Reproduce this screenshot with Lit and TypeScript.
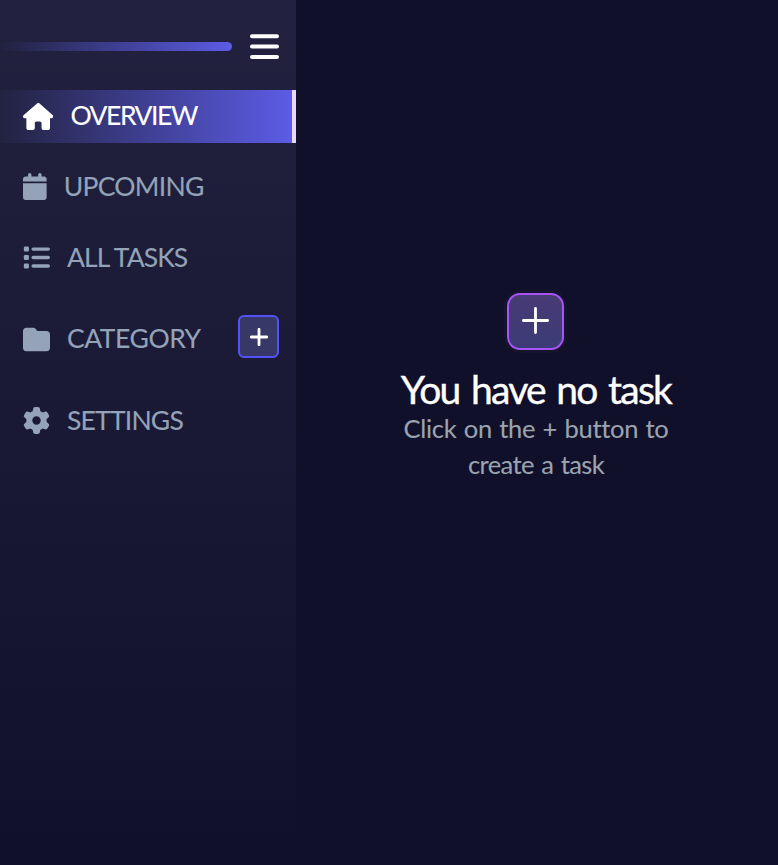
import { LitElement, html, css, svg } from "lit";
import { customElement } from "lit/decorators.js";

const house = svg`<path d="M575.8 255.5c0 18-15 32.1-32 32.1h-32l.7 160.2c0 2.7-.2 5.4-.5 8.1V472c0 22.1-17.9 40-40 40H456c-1.1 0-2.2 0-3.3-.1c-1.4 .1-2.8 .1-4.2 .1H416 392c-22.1 0-40-17.9-40-40V448 384c0-17.7-14.3-32-32-32H256c-17.7 0-32 14.3-32 32v64 24c0 22.1-17.9 40-40 40H160 128.1c-1.5 0-3-.1-4.5-.2c-1.2 .1-2.4 .2-3.6 .2H104c-22.1 0-40-17.9-40-40V360c0-.9 0-1.9 .1-2.8V287.6H32c-18 0-32-14-32-32.1c0-9 3-17 10-24L266.4 8c7-7 15-8 22-8s15 2 21 7L564.8 231.5c8 7 12 15 11 24z"/>`;
const calendar = svg`<path d="M96 32V64H48C21.5 64 0 85.5 0 112v48H448V112c0-26.5-21.5-48-48-48H352V32c0-17.7-14.3-32-32-32s-32 14.3-32 32V64H160V32c0-17.7-14.3-32-32-32S96 14.3 96 32zM448 192H0V464c0 26.5 21.5 48 48 48H400c26.5 0 48-21.5 48-48V192z"/>`;
const list = svg`<rect x="16" y="48" width="96" height="96" rx="24"/><rect x="16" y="208" width="96" height="96" rx="24"/><rect x="16" y="368" width="96" height="96" rx="24"/><rect x="160" y="64" width="352" height="64" rx="32"/><rect x="160" y="224" width="352" height="64" rx="32"/><rect x="160" y="384" width="352" height="64" rx="32"/>`;
const folder = svg`<path d="M64 480H448c35.3 0 64-28.7 64-64V160c0-35.3-28.7-64-64-64H288c-10.1 0-19.6-4.7-25.6-12.8L243.2 57.6C231.1 41.5 212.1 32 192 32H64C28.7 32 0 60.7 0 96V416c0 35.3 28.7 64 64 64z"/>`;
const gear = svg`<path d="M495.9 166.6c3.2 8.7 .5 18.4-6.4 24.6l-43.3 39.4c1.1 8.3 1.7 16.8 1.7 25.4s-.6 17.1-1.7 25.4l43.3 39.4c6.9 6.2 9.6 15.9 6.4 24.6c-4.4 11.9-9.7 23.3-15.8 34.3l-4.7 8.1c-6.6 11-14 21.4-22.1 31.2c-5.9 7.2-15.7 9.6-24.5 6.8l-55.7-17.7c-13.4 10.3-28.2 18.9-44 25.4l-12.5 57.1c-2 9.1-9 16.3-18.2 17.8c-13.8 2.3-28 3.5-42.5 3.5s-28.7-1.2-42.5-3.5c-9.2-1.5-16.2-8.7-18.2-17.8l-12.5-57.1c-15.8-6.5-30.6-15.1-44-25.4L83.1 425.9c-8.8 2.8-18.6 .3-24.5-6.8c-8.1-9.8-15.5-20.2-22.1-31.2l-4.7-8.1c-6.1-11-11.4-22.4-15.8-34.3c-3.2-8.7-.5-18.4 6.4-24.6l43.3-39.4C64.6 273.1 64 264.6 64 256s.6-17.1 1.7-25.4L22.4 191.2c-6.9-6.2-9.6-15.9-6.4-24.6c4.4-11.9 9.7-23.3 15.8-34.3l4.7-8.1c6.6-11 14-21.4 22.1-31.2c5.9-7.2 15.7-9.6 24.5-6.8l55.7 17.7c13.4-10.3 28.2-18.9 44-25.4l12.5-57.1c2-9.1 9-16.3 18.2-17.8C227.3 1.2 241.5 0 256 0s28.7 1.2 42.5 3.5c9.2 1.5 16.2 8.7 18.2 17.8l12.5 57.1c15.8 6.5 30.6 15.1 44 25.4l55.7-17.7c8.8-2.8 18.6-.3 24.5 6.8c8.1 9.8 15.5 20.2 22.1 31.2l4.7 8.1c6.1 11 11.4 22.4 15.8 34.3zM256 336a80 80 0 1 0 0-160 80 80 0 1 0 0 160z"/>`;

const items = [
  { id: "overview", label: "OVERVIEW", icon: house, box: "0 0 576 512" },
  { id: "upcoming", label: "UPCOMING", icon: calendar, box: "0 0 448 512" },
  { id: "tasks", label: "ALL TASKS", icon: list, box: "0 0 512 512" },
  { id: "category", label: "CATEGORY", icon: folder, box: "0 0 512 512" },
  { id: "settings", label: "SETTINGS", icon: gear, box: "0 0 512 512" },
];

@customElement("app-root")
export class AppRoot extends LitElement {
  static styles = css`
    :host {
      display: flex;
      height: 865px;
      background: #10102a;
      font-family: "Gill Sans", "Gill Sans MT", Lato, sans-serif;
      color: #fff;
    }
    * { box-sizing: border-box; }
    button { padding: 0; font: inherit; color: inherit; }
    svg { display: block; flex: none; }
    .side {
      width: 296px;
      flex: none;
      background: linear-gradient(#222240, #10102a);
    }
    .top {
      height: 90px;
      padding: 3px 17px 0 0;
      display: flex;
      align-items: center;
      gap: 18px;
    }
    .bar {
      flex: 1;
      height: 9px;
      border-radius: 5px;
      background: linear-gradient(to right, #5c5ce600, #5c5ce6);
    }
    .menu { border: 0; background: none; }
    nav { display: flex; flex-direction: column; gap: 18px; }
    .item {
      height: 53px;
      padding: 0 17px 2px 23px;
      display: flex;
      align-items: center;
      color: #94a3b8;
      font-size: 26.5px;
      line-height: 32px;
      white-space: nowrap;
    }
    .label { margin-top: -2px; -webkit-text-stroke: 0.1px currentColor; }
    .item > svg { height: 27px; margin-right: 17px; }
    .overview {
      color: #fff;
      background: linear-gradient(to right, #222240, #5c5ce6);
      border-right: 4px solid #e9d5ff;
    }
    .overview > svg { margin-top: 1px; }
    .category { height: 67px; padding-bottom: 0; }
    .category > svg { margin-top: 5px; }
    .category .label { margin-top: 2px; }
    .settings { height: 64px; padding-bottom: 0; }
    .settings .label { margin-top: 0; }
    .overview .label { letter-spacing: -1.45px; }
    .upcoming .label { letter-spacing: -0.7px; }
    .tasks .label { letter-spacing: -0.9px; }
    .category .label { letter-spacing: -0.45px; }
    .settings .label { letter-spacing: -0.8px; }
    .add {
      width: 41px;
      height: 43px;
      margin-left: auto;
      border: 2px solid #5353fb;
      border-radius: 6px;
      background: #383868;
      display: grid;
      place-items: center;
    }
    .main {
      flex: 1;
      padding-top: 293px;
      display: flex;
      flex-direction: column;
      align-items: center;
      text-align: center;
    }
    .create {
      width: 57px;
      height: 57px;
      margin-right: 3px;
      border: 2px solid #a855f7;
      border-radius: 13px;
      background: linear-gradient(#483a75, #3b3c76);
      box-shadow: 0 0 0 3px #15132d;
      display: grid;
      place-items: center;
    }
    .create svg { margin-bottom: 2px; }
    h1 {
      margin: 17px 2px 0 0;
      font-size: 39px;
      font-weight: 400;
      line-height: 45px;
      letter-spacing: -1.75px;
      word-spacing: 3.2px;
      -webkit-text-stroke: 0.4px currentColor;
      white-space: nowrap;
    }
    p {
      margin: 0;
      font-size: 25.5px;
      line-height: 36px;
      color: #9ca3af;
      -webkit-text-stroke: 0.1px currentColor;
      white-space: nowrap;
    }
    .one { margin-top: -2px; margin-right: 2px; letter-spacing: -0.3px; word-spacing: 1.2px; }
    .two { margin-right: 2px; letter-spacing: -0.6px; word-spacing: 1.5px; }
  `;

  render() {
    return html`
      <aside class="side">
        <div class="top">
          <div class="bar"></div>
          <button class="menu" aria-label="Menu">
            <svg width="29" height="26" viewBox="0 0 29 26" stroke="#fff" stroke-width="4" stroke-linecap="round">
              <path d="M2 2.3H27M2 12.6H27M2 23H27" />
            </svg>
          </button>
        </div>
        <nav>
          ${items.map((i) => html`
            <div class="item ${i.id}">
              <svg viewBox=${i.box} fill="currentColor">${i.icon}</svg>
              <span class="label">${i.label}</span>
              ${i.id === "category" ? html`
                <button class="add" aria-label="Add category">
                  <svg width="18" height="18" viewBox="0 0 18 18" stroke="#fff" stroke-width="2.8" stroke-linecap="round">
                    <path d="M9 1.3V16.7M1.3 9H16.7" />
                  </svg>
                </button>` : ""}
            </div>`)}
        </nav>
      </aside>
      <main class="main">
        <button class="create" aria-label="Create task">
          <svg width="27" height="27" viewBox="0 0 27 27" stroke="#fff" stroke-width="2.8" stroke-linecap="round">
            <path d="M13.5 1.4V25.6M1.4 13.5H25.6" />
          </svg>
        </button>
        <h1>You have no task</h1>
        <p class="one">Click on the + button to</p>
        <p class="two">create a task</p>
      </main>
    `;
  }
}
